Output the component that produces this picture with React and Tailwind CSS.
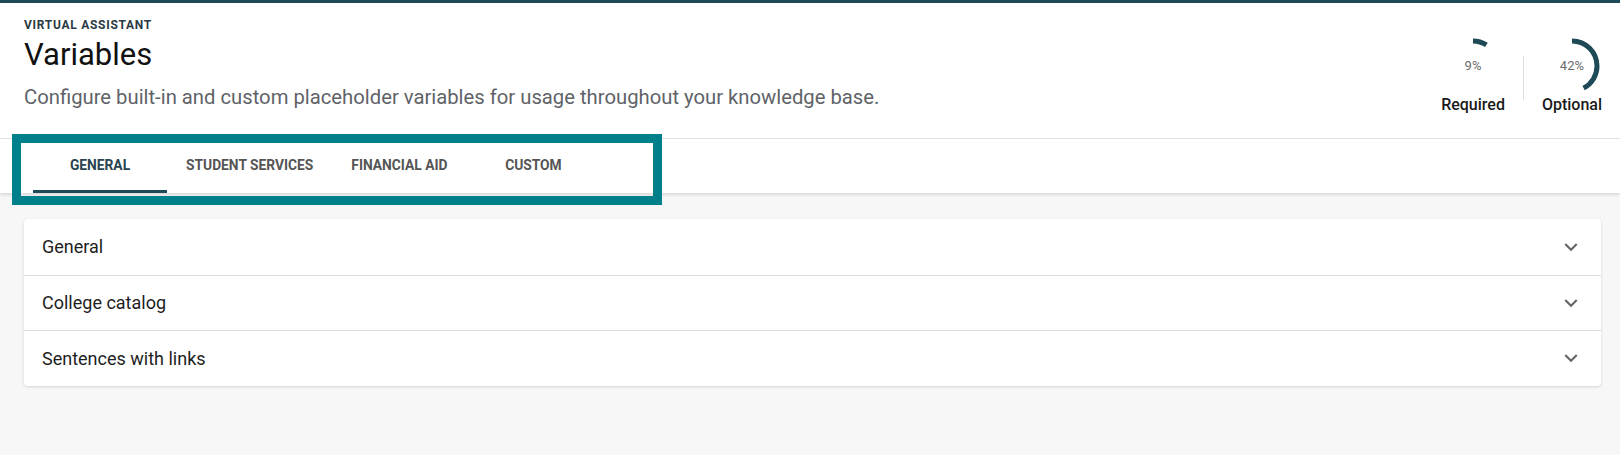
const tabs = [
  { label: 'GENERAL', active: true },
  { label: 'STUDENT SERVICES' },
  { label: 'FINANCIAL AID' },
  { label: 'CUSTOM' },
];

const sections = ['General', 'College catalog', 'Sentences with links'];

const Gauge = ({ value, label }) => {
  const r = 25;
  const c = 2 * Math.PI * r;
  return (
    <div className="flex flex-col items-center">
      <div className="relative w-[56px] h-[56px]">
        <svg width="56" height="56" viewBox="0 0 56 56" className="-rotate-90">
          <circle
            cx="28"
            cy="28"
            r={r}
            fill="none"
            stroke="#1d4a56"
            strokeWidth="5"
            strokeDasharray={`${(c * value) / 100} ${c}`}
          />
        </svg>
        <span className="absolute inset-0 flex items-center justify-center text-[13px] text-[#6b6b6b]">
          {value}%
        </span>
      </div>
      <span className="mt-[1px] text-base leading-[19px] font-medium text-[#1a1a1a]">{label}</span>
    </div>
  );
};

// material "expand_more"
const ExpandMore = () => (
  <svg width="26" height="26" viewBox="0 0 24 24" fill="#666">
    <path d="M16.59 8.59 12 13.17 7.41 8.59 6 10l6 6 6-6z" />
  </svg>
);

const App = () => {
  return (
    <div className="min-h-screen bg-[#f7f7f7] font-['Roboto',sans-serif]">
      {/* Header */}
      <header className="bg-white border-t-[3px] border-t-[#1d4a56] border-b border-b-[#e2e2e2] h-[139px] pl-6 pr-[18px] flex justify-between">
        <div className="pt-[15px]">
          <p className="text-[12px] leading-[14px] font-bold tracking-[0.06em] text-[#2a3a44]">VIRTUAL ASSISTANT</p>
          <h1 className="mt-[3px] text-[31px] leading-[40px] text-[#111]">Variables</h1>
          <p className="mt-[9px] text-[20.25px] leading-[26px] text-[#5f6368]">
            Configure built-in and custom placeholder variables for usage throughout your knowledge base.
          </p>
        </div>
        <div className="flex pt-[35px]">
          <Gauge value={9} label="Required" />
          <div className="mx-[18px] mt-[18px] h-[44px] w-px bg-[#dedede]" />
          <Gauge value={42} label="Optional" />
        </div>
      </header>

      {/* Tabs */}
      <div className="relative bg-white h-[54px] pl-[33px] shadow-[0_2px_3px_rgba(0,0,0,0.12)]">
        <div className="flex h-full">
          {tabs.map((tab) => (
            <div
              key={tab.label}
              className={`min-w-[134px] px-[19px] flex items-center justify-center text-[13.8px] font-bold ${
                tab.active ? 'text-[#2a4350] border-b-[3px] border-[#1d4a56] pt-[2px]' : 'text-[#555] pb-[1px]'
              }`}
            >
              {tab.label}
            </div>
          ))}
        </div>
        <div className="absolute left-[12px] top-[-5px] w-[650px] h-[71px] border-[9px] border-[#00808a]" />
      </div>

      {/* Sections */}
      <main className="pl-6 pr-[19px] pt-[26px]">
        <div className="bg-white rounded-[4px] shadow-[0_1px_3px_rgba(0,0,0,0.15)]">
          {sections.map((s, i) => (
            <div
              key={s}
              className={`h-[55.5px] flex items-center justify-between pl-[18px] pr-[17px] ${
                i > 0 ? 'border-t border-[#dcdcdc]' : ''
              }`}
            >
              <span className="text-[18px] text-[#1e1e1e]">{s}</span>
              <ExpandMore />
            </div>
          ))}
        </div>
      </main>
    </div>
  );
};

export default App;
